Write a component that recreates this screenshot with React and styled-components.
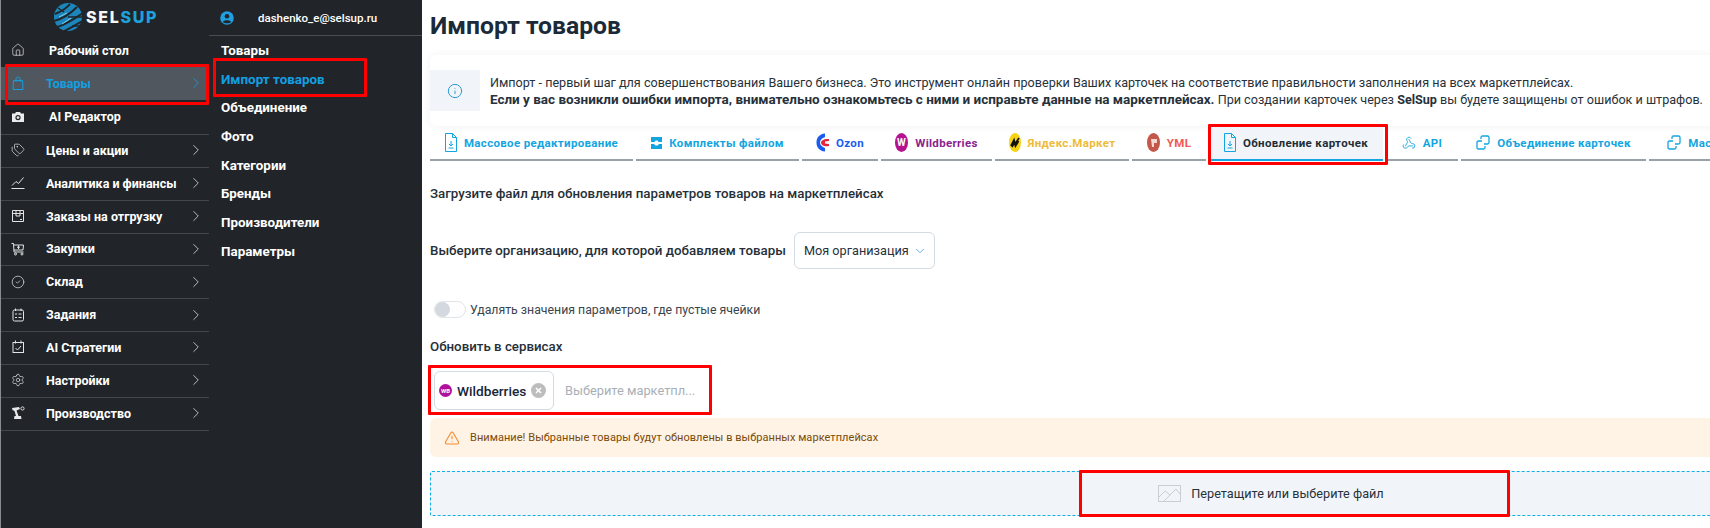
import React from "react";
import styled, { createGlobalStyle } from "styled-components";
import {
  House,
  Tags,
  CircleCheck,
  Settings,
  ChevronRight,
  ChevronDown,
  Info,
  Webhook,
  TriangleAlert,
} from "lucide-react";

const GlobalStyle = createGlobalStyle`
  html, body { margin: 0; padding: 0; background: #fff; }
  body { font-family: Roboto, "Liberation Sans", sans-serif; overflow: hidden; }
`;

const Page = styled.div`
  position: relative;
  display: grid;
  grid-template-columns: 209px 213px 1fr;
  width: 1710px;
  height: 528px;
  overflow: hidden;
`;

const Sidebar = styled.nav`
  background: #212529;
  border-left: 1px solid #8a8d90;
  box-sizing: border-box;
`;

const LogoRow = styled.div`
  display: flex;
  align-items: center;
  gap: 3px;
  height: 34px;
  padding-left: 53px;
`;

const LogoText = styled.span`
  font-family: Inter, sans-serif;
  font-size: 16px;
  font-weight: 800;
  letter-spacing: 1.7px;
  color: #f4f6f7;
  & b {
    font-weight: 800;
    color: #1da1dc;
  }
`;

const NavItem = styled.div`
  display: flex;
  align-items: center;
  height: ${({ $h }) => $h || 33}px;
  box-sizing: border-box;
  padding: 0 4px 1px 10px;
  background: ${({ $active }) => ($active ? "#50575e" : "transparent")};
  border-bottom: ${({ $line }) => ($line ? "1px solid #43474c" : "none")};
  color: ${({ $active }) => ($active ? "#129fe0" : "#fff")};
`;

const NavIcon = styled.span`
  display: flex;
  width: 14px;
  color: ${({ $active }) => ($active ? "#129fe0" : "#e2e4e5")};
`;

const NavLabel = styled.span`
  flex: 1;
  margin-left: ${({ $shift }) => 21 + ($shift || 0)}px;
  font-size: 12.5px;
  font-weight: 700;
`;

const NavChevron = styled.span`
  display: flex;
  color: ${({ $active }) => ($active ? "#129fe0" : "#d8dadb")};
`;

const SubPanel = styled.div`
  background: #212529;
`;

const UserRow = styled.div`
  display: flex;
  align-items: center;
  height: 36px;
  padding-left: 11px;
  border-bottom: 1px solid #4a4e52;
  box-sizing: border-box;
  color: #fff;
  font-size: 11.5px;
  font-weight: 500;
`;

const UserEmail = styled.span`
  margin-left: 24px;
`;

const SubList = styled.div`
  display: flex;
  flex-direction: column;
  padding: 1px 0 0 12px;
`;

const SubItem = styled.div`
  height: 28.7px;
  line-height: 28.7px;
  font-size: 13.4px;
  font-weight: 700;
  color: ${({ $active }) => ($active ? "#129fe0" : "#fff")};
`;

const Main = styled.main`
  padding-left: 8px;
  color: #1d2730;
  min-width: 0;
`;

const Title = styled.h1`
  margin: 0;
  height: 55px;
  line-height: 51px;
  font-size: 24.7px;
  font-weight: 700;
  color: #1b2a38;
`;

const InfoCard = styled.section`
  display: flex;
  align-items: center;
  height: 71px;
  margin-right: -40px;
  border-radius: 6px;
  box-shadow: 0 0 8px rgba(20, 40, 60, 0.06);
`;

const InfoIconBox = styled.div`
  display: flex;
  align-items: center;
  justify-content: center;
  flex: none;
  width: 50px;
  height: 41px;
  background: #f1f5f9;
  color: #2f9bd8;
`;

const InfoText = styled.div`
  margin-left: 10px;
  font-size: 12.6px;
  line-height: 17px;
  white-space: nowrap;
  color: #27313a;
`;

const Strong = styled.b`
  font-size: 13.48px;
  font-weight: 700;
`;

const Brand = styled.b`
  font-weight: 700;
`;

const Tabs = styled.div`
  display: flex;
  gap: 3px;
  height: 35px;
`;

const Tab = styled.div`
  display: flex;
  flex: none;
  align-items: center;
  justify-content: center;
  gap: 7px;
  width: ${({ $w }) => $w}px;
  box-sizing: border-box;
  background: ${({ $active }) => ($active ? "#f1f5f9" : "transparent")};
  border-bottom: 2px solid ${({ $active }) => ($active ? "#12a5e0" : "#98a2aa")};
  font-size: 11.5px;
  font-weight: 700;
  letter-spacing: 0.33px;
  white-space: nowrap;
  color: ${({ $color }) => $color || "#12a5e0"};
`;

const SectionTitle = styled.div`
  font-size: 13.3px;
  font-weight: 500;
  color: #262f38;
  margin-top: ${({ $top }) => $top}px;
  height: 16px;
  line-height: 16px;
`;

const OrgRow = styled.div`
  display: flex;
  align-items: center;
  gap: 8px;
  margin-top: 30px;
  font-size: 13.3px;
  font-weight: 500;
  color: #262f38;
`;

const OrgSelect = styled.div`
  display: flex;
  align-items: center;
  gap: 4px;
  width: 141px;
  height: 37px;
  box-sizing: border-box;
  padding-left: 9px;
  border: 1px solid #d3dce2;
  border-radius: 6px;
  font-size: 12.7px;
  font-weight: 400;
  color: #27313a;
`;

const ToggleRow = styled.div`
  display: flex;
  align-items: center;
  gap: 4px;
  margin-top: 32px;
  padding-left: 4px;
  font-size: 12.3px;
  color: #3a444d;
`;

const ToggleTrack = styled.span`
  display: flex;
  align-items: center;
  width: 32px;
  height: 17px;
  box-sizing: border-box;
  border: 1px solid #dfe4e8;
  border-radius: 9px;
`;

const ToggleKnob = styled.span`
  width: 15px;
  height: 15px;
  border-radius: 50%;
  background: #d3d9de;
`;

const ServiceRow = styled.div`
  display: flex;
  align-items: center;
  gap: 11px;
  margin-top: 16px;
  padding-left: 4px;
`;

const Chip = styled.div`
  display: flex;
  align-items: center;
  width: 120px;
  height: 39px;
  box-sizing: border-box;
  padding-left: 4px;
  border: 1px solid #d3dce2;
  border-radius: 6px;
  font-size: 13.7px;
  font-weight: 500;
  color: #17263a;
`;

const ChipLogo = styled.span`
  display: flex;
  align-items: center;
  justify-content: center;
  width: 13px;
  height: 13px;
  margin-right: 5px;
  border-radius: 50%;
  background: #b0109a;
  color: #fff;
  font-size: 6px;
  font-weight: 700;
`;

const ChipClose = styled.span`
  display: flex;
  align-items: center;
  justify-content: center;
  width: 15px;
  height: 15px;
  margin-left: 5px;
  border-radius: 50%;
  background: #bdbdbd;
`;

const Placeholder = styled.span`
  font-size: 12.8px;
  color: #a9afb6;
`;

const Alert = styled.div`
  display: flex;
  align-items: center;
  gap: 10px;
  height: 39px;
  margin-top: 8px;
  padding-left: 14px;
  border-radius: 6px 0 0 6px;
  background: #fff3e6;
  font-size: 11px;
  letter-spacing: 0.05px;
  color: #7a4a08;
`;

const DropZone = styled.div`
  display: flex;
  align-items: center;
  justify-content: center;
  gap: 10px;
  width: 1682px;
  height: 45px;
  box-sizing: border-box;
  margin-top: 14px;
  border: 1px dashed #12b0e8;
  border-radius: 2px;
  background: #f1f5f9;
  font-size: 12.7px;
  color: #27313a;
`;

// red frames drawn on top of the screenshot
const RedBox = styled.div`
  position: absolute;
  left: ${({ $x }) => $x}px;
  top: ${({ $y }) => $y}px;
  width: ${({ $w }) => $w}px;
  height: ${({ $h }) => $h}px;
  box-sizing: border-box;
  border: 3px solid #ff0000;
  border-radius: 1px;
  pointer-events: none;
`;

const Logo = () => (
  <svg width="29" height="30" viewBox="0 0 29 30">
    <circle cx="14" cy="15" r="14" fill="#1b86bb" />
    <path d="M1 12 C6 10 12 7 16 2 M0 19 C8 17 16 12 23 5 M3 25 C11 23 20 17 29 11 M10 29 C15 27 21 23 29 19" stroke="#212529" strokeWidth="2" fill="none" />
    <path d="M4 6 L10 10 M14 15 L29 15 M18 24 L28 24" stroke="#212529" strokeWidth="1.5" />
    <path d="M5 15 L13 11 M8 22 L17 16" stroke="#7fd0f0" strokeWidth="1" />
  </svg>
);

const stroke = { fill: "none", stroke: "currentColor", strokeWidth: 1 };

const BagIcon = () => (
  <svg width="14" height="14" viewBox="0 0 14 14" {...stroke}>
    <path d="M2.5 4.5 H11.5 L12 13.5 H2 Z M5 6 V2.8 C5 0.5 9 0.5 9 2.8 V6" />
  </svg>
);

const CameraIcon = () => (
  <svg width="14" height="14" viewBox="0 0 14 14" fill="#e9ebec">
    <path fillRule="evenodd" d="M1 3.5 H4 L5 2 H9 L10 3.5 H13 V12 H1 Z M7 5 A2.6 2.6 0 1 0 7 10.2 A2.6 2.6 0 1 0 7 5 Z" />
    <circle cx="7" cy="7.6" r="1.4" />
  </svg>
);

const ChartIcon = () => (
  <svg width="14" height="14" viewBox="0 0 14 14" {...stroke}>
    <path d="M1 9.5 L5 5.5 L7.5 7.5 L12.5 1.5 M0.5 12.5 H13.5" />
  </svg>
);

const BoxIcon = () => (
  <svg width="14" height="14" viewBox="0 0 14 14" {...stroke}>
    <path d="M1.5 1.5 H12.5 V12.5 H1.5 Z M1.5 4.5 H12.5 M5 1.5 V7 H9 V1.5 M9 10.5 H11" />
  </svg>
);

const CartIcon = () => (
  <svg width="14" height="14" viewBox="0 0 14 14" {...stroke}>
    <path d="M0.5 1.5 H2.5 L3 10 H12.5 M2.8 3 H12.5 L12 8 H3 M7.5 3.5 V7 M6 5.2 H9" />
    <circle cx="4.5" cy="12" r="1" />
    <circle cx="11" cy="12" r="1" />
  </svg>
);

const TaskIcon = () => (
  <svg width="14" height="14" viewBox="0 0 14 14" {...stroke}>
    <rect x="2" y="2" width="10.5" height="11" rx="1.5" />
    <path d="M4.5 0.5 V3 M10 0.5 V3 M4 6 H6 M7.5 6 H10.5 M4 9.5 H6 M7.5 9.5 H10.5" />
  </svg>
);

const StrategyIcon = () => (
  <svg width="14" height="14" viewBox="0 0 14 14" {...stroke}>
    <rect x="2" y="2.5" width="10.5" height="10" />
    <path d="M4.5 0.5 V3.5 M10 0.5 V3.5 M4.5 8 L6.5 10 L10 6" />
  </svg>
);

const RobotIcon = () => (
  <svg width="14" height="14" viewBox="0 0 14 14" fill="#e6e7e8">
    <path d="M1 2 L8 1 L9 3 L5.5 4.5 L7.5 10 L10 10 L10.5 13 L3 13 L3.5 10 L5 10 L3.5 5 L1.5 4 Z" />
    <circle cx="11.5" cy="2.5" r="1.6" fill="none" stroke="#e6e7e8" strokeWidth="0.9" />
  </svg>
);

const UserIcon = () => (
  <svg width="14" height="14" viewBox="0 0 14 14">
    <circle cx="7" cy="7" r="6.8" fill="#1f9ee0" />
    <circle cx="7" cy="5.2" r="2.3" fill="#212529" />
    <path d="M2.8 11 C4 8.6 10 8.6 11.2 11 C9.5 12.8 4.5 12.8 2.8 11 Z" fill="#212529" />
  </svg>
);

const FileIcon = () => (
  <svg width="12" height="19" viewBox="0 0 12 19" fill="none" stroke="#12a5e0" strokeWidth="1">
    <path d="M0.5 0.5 H7.5 L11.5 4.5 V18.5 H0.5 Z M7.5 0.5 V4.5 H11.5" />
    <path d="M6 8 V13 M4 11 L6 13 L8 11 M3.5 15 H8.5" />
  </svg>
);

const TraysIcon = () => (
  <svg width="11" height="12" viewBox="0 0 11 12" fill="#12a5e0">
    <path d="M0 0 H11 V5 H7.5 L6.5 3.5 H4.5 L3.5 5 H0 Z" />
    <path d="M0 7 H3 L4.5 8.5 H6.5 L8 7 H11 V12 H0 Z" />
  </svg>
);

const LinkIcon = () => (
  <svg width="14" height="15" viewBox="0 0 14 15" fill="none" stroke="#12a5e0" strokeWidth="1.3">
    <path d="M5 4 V2.5 Q5 1 6.5 1 H11.5 Q13 1 13 2.5 V7.5 Q13 9 11.5 9 H8" />
    <path d="M9 11 V12.5 Q9 14 7.5 14 H2.5 Q1 14 1 12.5 V7.5 Q1 6 2.5 6 H6" />
  </svg>
);

const OzonIcon = () => (
  <svg width="13" height="19" viewBox="0 0 13 19">
    <path d="M9 0.5 C3 1 0.5 5 0.5 9.5 C0.5 14 3 18 9 18.5 L9 15 C6 14 4 12 4 9.5 C4 7 6 5 9 4 Z" fill="#1a5cf0" />
    <path d="M13 6 C8 5.5 5 7.5 5 9.8 C5 12 8 14 13 13 L13 11 L9 10.5 L9 8.5 L13 8 Z" fill="#e8243c" />
  </svg>
);

const WbIcon = () => (
  <svg width="13" height="19" viewBox="0 0 13 19">
    <ellipse cx="6.5" cy="9.5" rx="6.5" ry="9.5" fill="#b5128f" />
    <text x="6.5" y="13" textAnchor="middle" fontSize="10" fontWeight="700" fill="#fff" fontFamily="Roboto">W</text>
  </svg>
);

const YandexIcon = () => (
  <svg width="12" height="19" viewBox="0 0 12 19">
    <ellipse cx="6" cy="9.5" rx="6" ry="9.5" fill="#f5d312" />
    <path d="M2 13 L5 7 L6 11 L10 5 M3 14 L5.5 9 L6.5 13 L9.5 8" stroke="#111" strokeWidth="1.8" fill="none" />
  </svg>
);

const YmlIcon = () => (
  <svg width="13" height="19" viewBox="0 0 13 19">
    <ellipse cx="6.5" cy="9.5" rx="6.5" ry="9.5" fill="#c2574a" />
    <path d="M4 6 H10 V10 H7 V14 H5 Z" fill="#f3d9d4" />
  </svg>
);

const PictureIcon = () => (
  <svg width="23" height="17" viewBox="0 0 23 17" fill="none" stroke="#c9cfd4" strokeWidth="1">
    <rect x="0.5" y="0.5" width="22" height="16" />
    <path d="M1 12 L7 6 L12 10 L18 4 L22 9 M6 16 L13 9" />
  </svg>
);

const ROW = 32.85;

const navItems = [
  { label: "Рабочий стол", Icon: House, shift: 3 },
  { label: "Товары", Icon: BagIcon, active: true, arrow: true },
  { label: "AI Редактор", Icon: CameraIcon, shift: 3, h: 35, line: true },
  { label: "Цены и акции", Icon: Tags, arrow: true, line: true, h: ROW },
  { label: "Аналитика и финансы", Icon: ChartIcon, arrow: true, line: true, h: ROW },
  { label: "Заказы на отгрузку", Icon: BoxIcon, arrow: true, line: true, h: ROW },
  { label: "Закупки", Icon: CartIcon, arrow: true, line: true, h: ROW },
  { label: "Склад", Icon: CircleCheck, arrow: true, line: true, h: ROW },
  { label: "Задания", Icon: TaskIcon, arrow: true, line: true, h: ROW },
  { label: "AI Стратегии", Icon: StrategyIcon, arrow: true, line: true, h: ROW },
  { label: "Настройки", Icon: Settings, arrow: true, line: true, h: ROW },
  { label: "Производство", Icon: RobotIcon, arrow: true, line: true, h: ROW },
];

const subItems = ["Товары", "Импорт товаров", "Объединение", "Фото", "Категории", "Бренды", "Производители", "Параметры"];

const tabs = [
  { label: "Массовое редактирование", w: 203, icon: <FileIcon /> },
  { label: "Комплекты файлом", w: 163, icon: <TraysIcon /> },
  { label: "Ozon", w: 76, color: "#1a5cf0", icon: <OzonIcon /> },
  { label: "Wildberries", w: 111, color: "#8a1f8e", icon: <WbIcon /> },
  { label: "Яндекс.Маркет", w: 134, color: "#eebc36", icon: <YandexIcon /> },
  { label: "YML", w: 74, color: "#f05a50", icon: <YmlIcon /> },
  { label: "Обновление карточек", w: 174, color: "#232c35", active: true, icon: <FileIcon /> },
  { label: "API", w: 72, icon: <Webhook size={14} strokeWidth={1.5} color="#12a5e0" /> },
  { label: "Объединение карточек", w: 185, icon: <LinkIcon /> },
  { label: "Массовое обновление", w: 185, icon: <LinkIcon /> },
];

const App = () => (
  <Page>
    <GlobalStyle />
    <Sidebar>
      <LogoRow>
        <Logo />
        <LogoText>
          SEL<b>SUP</b>
        </LogoText>
      </LogoRow>
      {navItems.map(({ label, Icon, active, arrow, shift, h, line }) => (
        <NavItem key={label} $active={active} $h={h} $line={line}>
          <NavIcon $active={active}>
            <Icon size={14} strokeWidth={1.2} />
          </NavIcon>
          <NavLabel $shift={shift}>{label}</NavLabel>
          {arrow && (
            <NavChevron $active={active}>
              <ChevronRight size={18} strokeWidth={1.1} />
            </NavChevron>
          )}
        </NavItem>
      ))}
    </Sidebar>

    <SubPanel>
      <UserRow>
        <UserIcon />
        <UserEmail>dashenko_e@selsup.ru</UserEmail>
      </UserRow>
      <SubList>
        {subItems.map((item) => (
          <SubItem key={item} $active={item === "Импорт товаров"}>
            {item}
          </SubItem>
        ))}
      </SubList>
    </SubPanel>

    <Main>
      <Title>Импорт товаров</Title>
      <InfoCard>
        <InfoIconBox>
          <Info size={16} strokeWidth={1.5} />
        </InfoIconBox>
        <InfoText>
          Импорт - первый шаг для совершенствования Вашего бизнеса. Это инструмент онлайн проверки Ваших карточек на соответствие правильности заполнения на всех маркетплейсах.
          <br />
          <Strong>Если у вас возникли ошибки импорта, внимательно ознакомьтесь с ними и исправьте данные на маркетплейсах.</Strong>
          {"  "}При создании карточек через <Brand>SelSup</Brand> вы будете защищены от ошибок и штрафов.
        </InfoText>
      </InfoCard>
      <Tabs>
        {tabs.map((t) => (
          <Tab key={t.label} $w={t.w} $color={t.color} $active={t.active}>
            {t.icon}
            {t.label}
          </Tab>
        ))}
      </Tabs>

      <SectionTitle $top={25}>Загрузите файл для обновления параметров товаров на маркетплейсах</SectionTitle>
      <OrgRow>
        Выберите организацию, для которой добавляем товары
        <OrgSelect>
          Моя организация
          <ChevronDown size={14} color="#2f9bd8" strokeWidth={1.3} />
        </OrgSelect>
      </OrgRow>
      <ToggleRow>
        <ToggleTrack>
          <ToggleKnob />
        </ToggleTrack>
        Удалять значения параметров, где пустые ячейки
      </ToggleRow>
      <SectionTitle $top={21}>Обновить в сервисах</SectionTitle>
      <ServiceRow>
        <Chip>
          <ChipLogo>WB</ChipLogo>
          Wildberries
          <ChipClose>
            <svg width="7" height="7" viewBox="0 0 7 7">
              <path d="M1 1 L6 6 M6 1 L1 6" stroke="#fff" strokeWidth="1.6" />
            </svg>
          </ChipClose>
        </Chip>
        <Placeholder>Выберите маркетпл...</Placeholder>
      </ServiceRow>
      <Alert>
        <TriangleAlert size={16} color="#f58a2c" strokeWidth={1.6} />
        Внимание! Выбранные товары будут обновлены в выбранных маркетплейсах
      </Alert>
      <DropZone>
        <PictureIcon />
        Перетащите или выберите файл
      </DropZone>
    </Main>

    <RedBox $x={5} $y={64} $w={204} $h={41} />
    <RedBox $x={213} $y={58} $w={154} $h={39} />
    <RedBox $x={1208} $y={124} $w={180} $h={41} />
    <RedBox $x={428} $y={365} $w={284} $h={50} />
    <RedBox $x={1079} $y={470} $w={431} $h={47} />
  </Page>
);

export default App;
